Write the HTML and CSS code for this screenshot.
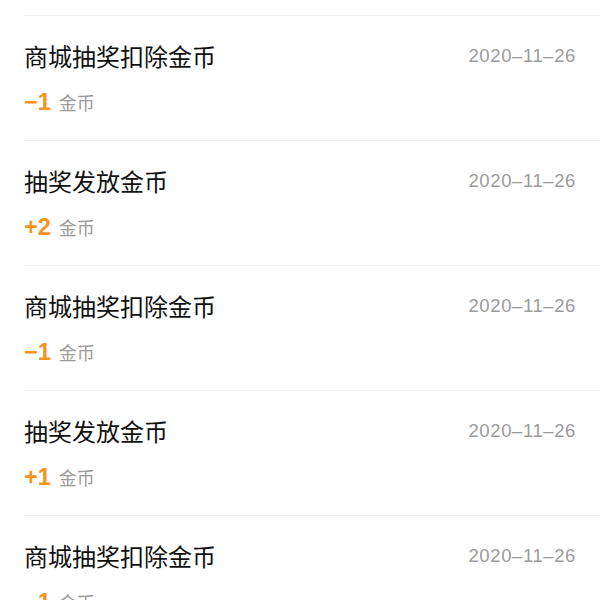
FILE: index.html
```html
<!DOCTYPE html>
<html lang="zh-CN">
<head>
<meta charset="utf-8">
<title>金币明细</title>
<link rel="stylesheet" href="styles.css">
</head>
<body>
<div class="list">
  <div class="row">
    <div class="head">
      <div class="title">商城抽奖扣除金币</div>
      <div class="date">2020–11–26</div>
    </div>
    <div class="amount"><span class="num">−1</span><span class="unit">金币</span></div>
  </div>
  <div class="row">
    <div class="head">
      <div class="title">抽奖发放金币</div>
      <div class="date">2020–11–26</div>
    </div>
    <div class="amount"><span class="num">+2</span><span class="unit">金币</span></div>
  </div>
  <div class="row">
    <div class="head">
      <div class="title">商城抽奖扣除金币</div>
      <div class="date">2020–11–26</div>
    </div>
    <div class="amount"><span class="num">−1</span><span class="unit">金币</span></div>
  </div>
  <div class="row">
    <div class="head">
      <div class="title">抽奖发放金币</div>
      <div class="date">2020–11–26</div>
    </div>
    <div class="amount"><span class="num">+1</span><span class="unit">金币</span></div>
  </div>
  <div class="row">
    <div class="head">
      <div class="title">商城抽奖扣除金币</div>
      <div class="date">2020–11–26</div>
    </div>
    <div class="amount"><span class="num">−1</span><span class="unit">金币</span></div>
  </div>
</div>
</body>
</html>
```
FILE: styles.css
```css
html, body {
  margin: 0;
  padding: 0;
  background: #ffffff;
  overflow: hidden;
}
body {
  font-family: "Noto Sans CJK SC", "Noto Sans", sans-serif;
}
.list {
  padding-top: 15px;
  padding-left: 24px;
}
.row {
  border-top: 1px solid #f0f0f0;
  padding: 23px 24px 23px 0;
  display: flex;
  flex-direction: column;
  gap: 14px;
}
.head {
  display: flex;
  justify-content: space-between;
  align-items: flex-start;
}
.title {
  font-size: 24px;
  line-height: 34px;
  color: #111111;
}
.date {
  font-family: "Liberation Sans", Arial, sans-serif;
  font-size: 18.5px;
  line-height: 33px;
  letter-spacing: 0.6px;
  color: #9b9b9b;
}
.amount {
  display: flex;
  align-items: baseline;
  gap: 8px;
  line-height: 30px;
}
.num {
  font-family: "Liberation Sans", Arial, sans-serif;
  font-weight: bold;
  font-size: 23.5px;
  color: #f7931e;
}
.unit {
  font-size: 18px;
  color: #9b9b9b;
}
```
